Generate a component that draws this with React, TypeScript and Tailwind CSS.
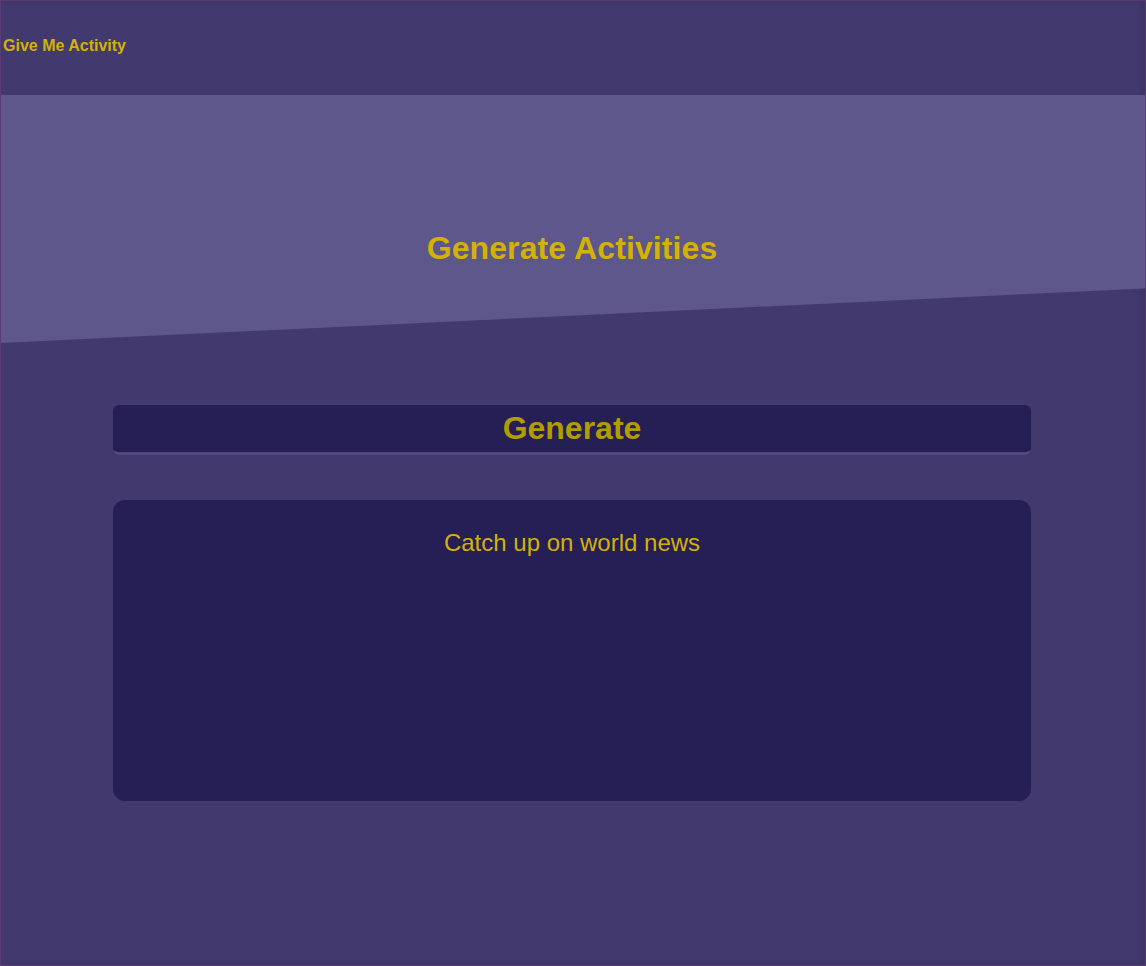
import React, { useState } from 'react';

const activities = ['Catch up on world news', 'Go for a walk', 'Learn a new recipe', 'Read a book'];

export default function App() {
    const [activity, setActivity] = useState(activities[0]);

    const generate = () => {
        setActivity(activities[Math.floor(Math.random() * activities.length)]);
    };

    return (
        <div
            className="min-h-[966px] bg-[#423a6e] border border-[#5a3b74] shadow-[inset_-4px_0_6px_rgba(0,0,0,0.12)] flex flex-col"
            style={{ fontFamily: '"Liberation Sans", Arial, sans-serif' }}
        >
            {/* Header */}
            <header className="h-[94px] flex items-center px-[2px] pb-[5px]">
                <h2 className="text-base font-bold text-[#d4b106]">Give Me Activity</h2>
            </header>

            {/* Hero */}
            <section className="h-[248px] bg-[#5d578b] [clip-path:polygon(0_0,100%_0,100%_78%,0_100%)] flex justify-center pt-[133px] pr-[2px]">
                <h1 className="text-[32px] leading-[40px] font-bold text-[#d4b106] tracking-[0.1px]">Generate Activities</h1>
            </section>

            {/* Main */}
            <main className="flex flex-col items-center mt-[62px] pr-[2px]">
                <button
                    type="button"
                    onClick={generate}
                    className="w-[918px] h-[50px] bg-[#251f55] border-b-[3px] border-[#4f4984] rounded-md text-[32px] font-bold text-[#b39c00] leading-none pb-[1px]"
                >
                    Generate
                </button>

                <div className="w-[918px] h-[301px] mt-[45px] bg-[#251f55] rounded-xl flex justify-center pt-[27px]">
                    <p className="text-2xl leading-[32px] text-[#d4b106]">{activity}</p>
                </div>
            </main>
        </div>
    );
}
